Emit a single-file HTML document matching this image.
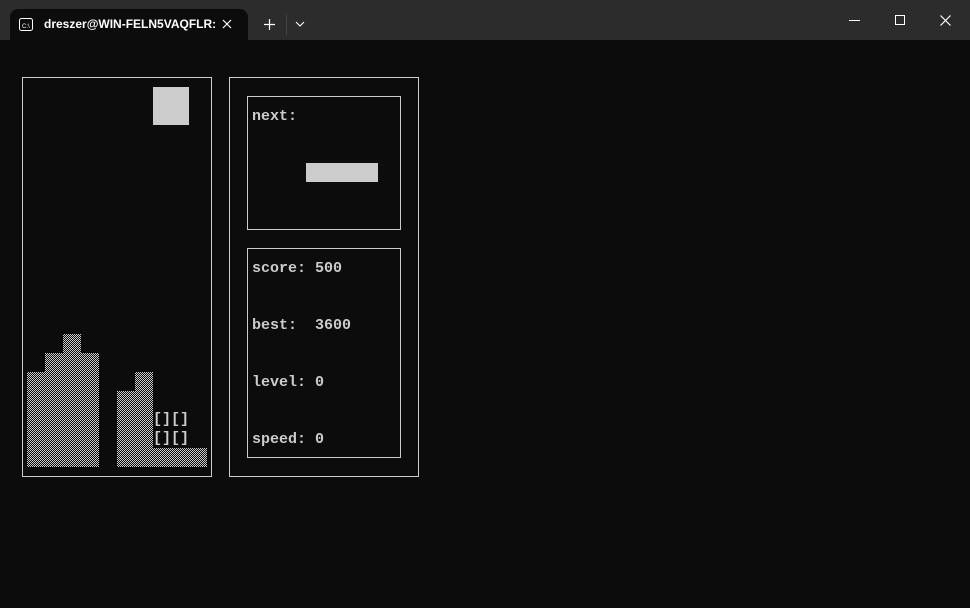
<!DOCTYPE html>
<html><head><style>
*{margin:0;padding:0;box-sizing:border-box}
body{width:970px;height:608px;background:#0c0c0c;position:relative;overflow:hidden;font-family:"Liberation Mono",monospace;color:#cccccc}
.bar{position:absolute;left:0;top:0;width:970px;height:40px;background:#2c2c2c}
.tab{position:absolute;left:10px;top:9px;width:238px;height:32px;background:#0c0c0c;border-radius:8px 8px 0 0}
.tt{position:absolute;left:44px;top:17px;font:bold 12px "Liberation Sans",sans-serif;color:#fff}
.b{position:absolute;border:1px solid #cccccc}
.s{position:absolute;background:#cccccc}
.t{position:absolute;font-size:15px;font-weight:bold;line-height:19px;white-space:pre}
</style></head><body>
<div class="bar"></div>
<div class="tab"></div>
<svg style="position:absolute;left:19px;top:18px" width="14" height="13"><rect x="0.5" y="0.5" width="13" height="12" rx="2" fill="none" stroke="#fff"/><text x="3" y="10" font-size="6" fill="#fff" font-family="Liberation Sans">C:\</text></svg>
<div class="tt">dreszer@WIN-FELN5VAQFLR:</div>
<svg style="position:absolute;left:222px;top:19px" width="10" height="10"><path d="M1 1L9 9M9 1L1 9" stroke="#fff" stroke-width="1.2"/></svg>
<svg style="position:absolute;left:264px;top:19px" width="11" height="11"><path d="M5.5 0V11M0 5.5H11" stroke="#fff" stroke-width="1.2"/></svg>
<div style="position:absolute;left:286px;top:15px;width:1px;height:20px;background:#444"></div>
<svg style="position:absolute;left:295px;top:21px" width="10" height="6"><path d="M1 1L5 5L9 1" stroke="#fff" fill="none" stroke-width="1.1"/></svg>
<div style="position:absolute;left:849px;top:20px;width:11px;height:1px;background:#fff"></div>
<div style="position:absolute;left:895px;top:15px;width:10px;height:10px;border:1px solid #fff"></div>
<svg style="position:absolute;left:940px;top:15px" width="11" height="11"><path d="M0.5 0.5L10.5 10.5M10.5 0.5L0.5 10.5" stroke="#fff" stroke-width="1.2"/></svg>

<div class="b" style="left:22px;top:77px;width:190px;height:400px"></div>
<div class="b" style="left:229px;top:77px;width:190px;height:400px"></div>
<div class="b" style="left:247px;top:96px;width:154px;height:134px"></div>
<div class="b" style="left:247px;top:248px;width:154px;height:210px"></div>

<div class="s" style="left:153px;top:87px;width:36px;height:38px"></div>
<div class="s" style="left:306px;top:163px;width:72px;height:19px"></div>

<svg style="position:absolute;left:0;top:0" width="970" height="608" shape-rendering="crispEdges">
<defs><pattern id="p" width="2" height="2" patternUnits="userSpaceOnUse"><rect width="1" height="1" fill="#cccccc"/><rect x="1" y="1" width="1" height="1" fill="#cccccc"/></pattern></defs>
<g fill="url(#p)">
<rect x="63" y="334" width="18" height="19"/>
<rect x="45" y="353" width="54" height="19"/>
<rect x="27" y="372" width="72" height="95"/>
<rect x="135" y="372" width="18" height="19"/>
<rect x="117" y="391" width="36" height="76"/>
<rect x="153" y="448" width="54" height="19"/>
</g></svg>
<div class="t" style="left:153px;top:410px">[][]
[][]</div>

<div class="t" style="left:252px;top:107px">next:</div>
<div class="t" style="left:252px;top:259px">score: 500</div>
<div class="t" style="left:252px;top:316px">best:  3600</div>
<div class="t" style="left:252px;top:373px">level: 0</div>
<div class="t" style="left:252px;top:430px">speed: 0</div>
</body></html>
